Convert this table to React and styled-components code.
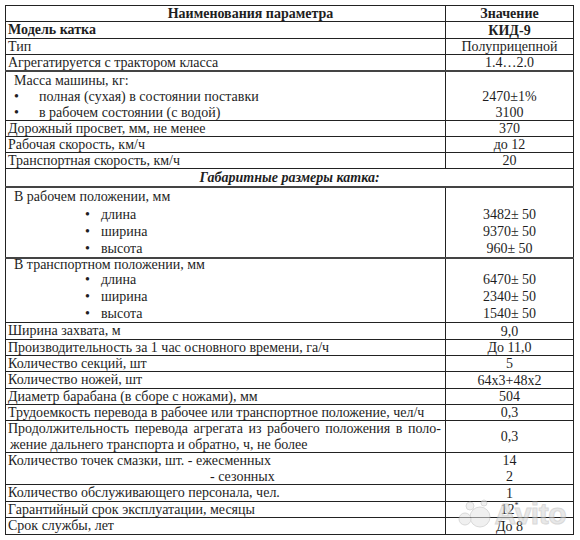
import React from 'react';
import styled, { createGlobalStyle } from 'styled-components';

const GlobalStyle = createGlobalStyle`
  html, body {
    margin: 0;
    padding: 0;
    background: #fff;
  }
  body {
    font-family: "Liberation Serif", "Times New Roman", serif;
    color: #1e1e1e;
  }
`;

const Page = styled.div`
  position: relative;
  width: 580px;
  height: 540px;
  padding: 5px 0 0 5px;
  box-sizing: border-box;
`;

const Table = styled.table`
  border-collapse: collapse;
  width: 568px;
  table-layout: fixed;
  font-size: 14px;
  line-height: 15px;
  border: 1.5px solid #222;
`;

const NameCol = styled.col`
  width: 440px;
`;

const ValueCol = styled.col`
  width: 128px;
`;

const Row = styled.tr`
  border-top: ${(p) => (p.$thick ? '2px solid #444' : '1px solid #222')};
`;

const NameCell = styled.td`
  padding: 0 2px;
  height: ${(p) => p.$h || 15}px;
  border-right: 1px solid #222;
  vertical-align: top;
  text-align: ${(p) => p.$align || 'left'};
  font-weight: ${(p) => (p.$bold ? 700 : 400)};
  white-space: nowrap;
`;

const ValueCell = styled.td`
  padding: 0;
  text-align: center;
  vertical-align: ${(p) => (p.$top ? 'top' : 'middle')};
  font-weight: ${(p) => (p.$bold ? 700 : 400)};
  white-space: nowrap;
`;

const SectionCell = styled.td`
  padding: 1px 0;
  text-align: center;
  font-weight: 700;
  font-style: italic;
`;

const Line = styled.div`
  height: ${(p) => p.$h || 15}px;
  line-height: ${(p) => p.$h || 15}px;
  padding-left: ${(p) => p.$indent || 0}px;
`;

const Bullet = styled.span`
  display: inline-block;
  width: ${(p) => p.$w}px;
`;

const Justified = styled.div`
  height: 16px;
  line-height: 16px;
  text-align: justify;
  text-align-last: justify;
  white-space: normal;
  padding-right: 2px;
`;

const Watermark = styled.div`
  position: absolute;
  right: 14px;
  bottom: 9px;
  display: flex;
  align-items: center;
  gap: 3px;
  opacity: 0.55;
  pointer-events: none;
`;

const WatermarkText = styled.span`
  font-family: "Liberation Sans", Arial, sans-serif;
  font-size: 30px;
  font-weight: 700;
  color: #d6d6d6;
  letter-spacing: -0.5px;
  -webkit-text-stroke: 1px #bbb;
`;

const simple = [
  ['Тип', 'Полуприцепной'],
  ['Агрегатируется  с трактором класса', '1.4…2.0'],
];

const simple2 = [
  ['Дорожный просвет, мм, не менее', '370'],
  ['Рабочая  скорость, км/ч', 'до 12'],
  ['Транспортная  скорость, км/ч', '20'],
];

const simple3 = [
  ['Ширина захвата, м', '9,0', 16],
  ['Производительность за 1 час основного времени, га/ч', 'До 11,0'],
  ['Количество секций, шт', '5'],
  ['Количество ножей, шт', '64х3+48х2', 16],
  ['Диаметр барабана  (в сборе с ножами), мм', '504'],
  ['Трудоемкость  перевода в рабочее или транспортное положение, чел/ч', '0,3'],
];

const Dims = ({ title, values, thick, first }) => (
  <Row $thick={thick}>
    <NameCell>
      <Line $h={first} $indent={6}>{title}</Line>
      {['длина', 'ширина', 'высота'].map((t) => (
        <Line key={t} $h={17} $indent={77}>
          <Bullet $w={16}>•</Bullet>
          {t}
        </Line>
      ))}
    </NameCell>
    <ValueCell $top>
      <Line $h={first} />
      {values.map((v) => (
        <Line key={v} $h={17}>{v}</Line>
      ))}
    </ValueCell>
  </Row>
);

const App = () => (
  <>
    <GlobalStyle />
    <Page>
      <Table>
        <colgroup>
          <NameCol />
          <ValueCol />
        </colgroup>
        <tbody>
          <Row>
            <NameCell $bold $align="center" style={{ paddingLeft: 52 }}>
              Наименования параметра
            </NameCell>
            <ValueCell $bold>Значение</ValueCell>
          </Row>
          <Row>
            <NameCell $bold $h={16}>Модель  катка</NameCell>
            <ValueCell $bold>КИД-9</ValueCell>
          </Row>
          {simple.map(([n, v]) => (
            <Row key={n}>
              <NameCell>{n}</NameCell>
              <ValueCell>{v}</ValueCell>
            </Row>
          ))}
          <Row $thick>
            <NameCell>
              <Line $indent={6} $h={17}>Масса  машины, кг:</Line>
              <Line $indent={6} $h={16}>
                <Bullet $w={25}>•</Bullet>
                полная (сухая) в состоянии поставки
              </Line>
              <Line $indent={6} $h={15}>
                <Bullet $w={25}>•</Bullet>
                в рабочем состоянии (с водой)
              </Line>
            </NameCell>
            <ValueCell $top>
              <Line $h={17} />
              <Line $h={16}>2470±1%</Line>
              <Line>3100</Line>
            </ValueCell>
          </Row>
          {simple2.map(([n, v]) => (
            <Row key={n}>
              <NameCell>{n}</NameCell>
              <ValueCell>{v}</ValueCell>
            </Row>
          ))}
          <Row>
            <SectionCell colSpan={2}>Габаритные размеры катка:</SectionCell>
          </Row>
          <Dims thick first={18} title="В рабочем положении, мм" values={['3482±  50', '9370±  50', '960±  50']} />
          <Dims thick first={12} title="В транспортном положении, мм" values={['6470±  50', '2340±  50', '1540±  50']} />
          {simple3.map(([n, v, h]) => (
            <Row key={n}>
              <NameCell $h={h}>{n}</NameCell>
              <ValueCell>{v}</ValueCell>
            </Row>
          ))}
          <Row>
            <NameCell>
              <Justified>
                Продолжительность перевода агрегата из рабочего положения в поло-
              </Justified>
              <Line $indent={2} $h={15}>жение дальнего транспорта и обратно, ч, не более</Line>
            </NameCell>
            <ValueCell>0,3</ValueCell>
          </Row>
          <Row>
            <NameCell>
              <Line $h={16}>Количество точек смазки, шт. - ежесменных</Line>
              <Line $indent={202}>- сезонных</Line>
            </NameCell>
            <ValueCell>
              <Line $h={16}>14</Line>
              <Line>2</Line>
            </ValueCell>
          </Row>
          <Row>
            <NameCell $h={16}>Количество  обслуживающего  персонала, чел.</NameCell>
            <ValueCell>1</ValueCell>
          </Row>
          <Row>
            <NameCell>Гарантийный  срок эксплуатации, месяцы</NameCell>
            <ValueCell>
              12<sup style={{ fontSize: 8, lineHeight: 0 }}>*</sup>
            </ValueCell>
          </Row>
          <Row>
            <NameCell $h={16}>Срок службы,  лет</NameCell>
            <ValueCell>До 8</ValueCell>
          </Row>
        </tbody>
      </Table>
      <Watermark>
        <svg width="34" height="30" viewBox="0 0 34 30">
          <g fill="#e4e4e4" stroke="#bbb" strokeWidth="1">
            <circle cx="22" cy="18" r="10" />
            <circle cx="7" cy="20" r="6" />
            <circle cx="12" cy="7" r="4" />
            <circle cx="26" cy="4" r="3" />
          </g>
        </svg>
        <WatermarkText>Avito</WatermarkText>
      </Watermark>
    </Page>
  </>
);

export default App;
